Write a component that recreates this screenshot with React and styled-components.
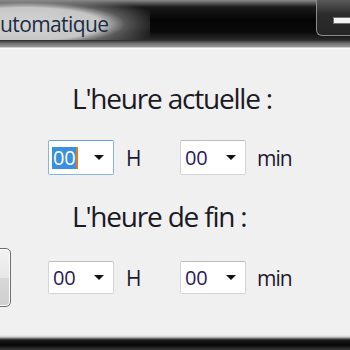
import React from "react";
import styled, { createGlobalStyle } from "styled-components";

const Global = createGlobalStyle`
  body {
    margin: 0;
    background: #f0f0f0;
    font-family: "Open Sans", "Noto Sans", sans-serif;
  }
`;

const Window = styled.div`
  width: 350px;
  height: 350px;
  display: flex;
  flex-direction: column;
  overflow: hidden;
  background: #f0f0f0;
`;

const TitleBar = styled.div`
  height: 40px;
  flex-shrink: 0;
  display: flex;
  align-items: flex-start;
  background: linear-gradient(#8a8a8a 0, #4a4a4a 4px, #1a1a1a 7px, #050505 20px, #0a0a0a 32px, #2a2a2a 40px);
`;

const TitleGlow = styled.div`
  height: 40px;
  width: 150px;
  display: flex;
  align-items: center;
  background: radial-gradient(ellipse 140px 30px at 25px 24px, #d4d4d4 0, #c6c6c6 55%, rgba(140, 140, 140, 0.6) 72%, rgba(20, 20, 20, 0) 100%);
`;

const Title = styled.span`
  font-family: "Open Sans", "Noto Sans", sans-serif;
  font-size: 21px;
  color: #1c2c44;
  letter-spacing: -0.6px;
  margin-top: 8px;
`;

const MinButton = styled.div`
  margin-left: auto;
  width: 34px;
  height: 36px;
  box-sizing: border-box;
  border: 1px solid #8c8c8c;
  border-top: none;
  border-right: none;
  border-bottom-left-radius: 6px;
  background: linear-gradient(#5a5a5a, #2c2c2c 40%, #262626);
  display: flex;
  align-items: center;
  justify-content: flex-end;
  padding-top: 6px;
`;

const MinBar = styled.span`
  width: 16px;
  height: 5px;
  background: #f4f4f4;
  border: 1px solid #707070;
  border-right: none;
`;

const Frame = styled.div`
  height: 10px;
  flex-shrink: 0;
  background: linear-gradient(#2a2a2a, #6a6a6a 3px, #9a9a9a 7px, #ffffff 8px, #f0f0f0 10px);
`;

const Content = styled.div`
  flex: 1;
  display: flex;
  flex-direction: column;
  background: #f0f0f0;
`;

const Heading = styled.div`
  font-family: "Open Sans", "Noto Sans", sans-serif;
  font-size: 28px;
  letter-spacing: -1.2px;
  color: #1a1a24;
  line-height: 34px;
  padding-left: 72px;
  margin-top: ${p => p.$top}px;
`;

const Row = styled.div`
  display: flex;
  align-items: center;
  height: 35px;
  padding-left: 48px;
  margin-top: ${p => p.$top}px;
`;

const SideButton = styled.div`
  flex-shrink: 0;
  width: 60px;
  height: 59px;
  margin-left: -97px;
  margin-right: 37px;
  box-sizing: border-box;
  border: 1px solid #707070;
  border-radius: 5px;
  background: linear-gradient(#f2f2f2, #e8e8e8 50%, #d8d8d8 51%, #cfcfcf);
  box-shadow: inset 0 0 0 1px #fbfbfb;
`;

const Combo = styled.div`
  flex-shrink: 0;
  width: 66px;
  height: ${p => p.$h}px;
  box-sizing: border-box;
  border: 1px solid ${p => (p.$focus ? "#88b4e0" : "#d4d4d4")};
  border-top-color: ${p => (p.$focus ? "#6a9ed4" : "#bcbcbc")};
  border-radius: 2px;
  background: #fff;
  display: flex;
  align-items: center;
  padding-left: 3px;
  padding-right: 9px;
`;

const Value = styled.span`
  font-family: "Open Sans", "Noto Sans", sans-serif;
  font-size: 20px;
  letter-spacing: -0.3px;
  line-height: 22px;
  color: ${p => (p.$selected ? "#ffffff" : "#2a1a5a")};
  background: ${p => (p.$selected ? "#3b8fe0" : "transparent")};
  border-right: ${p => (p.$selected ? "2px solid #e07a20" : "none")};
  padding: 0 1px;
`;

const Arrow = styled.span`
  margin-left: auto;
  width: 0;
  height: 0;
  border-left: 5px solid transparent;
  border-right: 5px solid transparent;
  border-top: 5px solid #111;
`;

const Unit = styled.span`
  flex-shrink: 0;
  font-family: "Open Sans", "Noto Sans", sans-serif;
  font-size: 21px;
  letter-spacing: -1px;
  color: #1e1a30;
  margin-left: ${p => p.$ml}px;
  width: ${p => p.$w}px;
`;

const BottomEdge = styled.div`
  height: 15px;
  flex-shrink: 0;
  background: linear-gradient(#f0f0f0, #d0d0d0 2px, #8a8a8a 3px, #1a1a1a 5px, #050505 10px, #3a3a3a 15px);
`;

const TimeCombo = ({ focus, h }) => (
  <Combo $focus={focus} $h={h}>
    <Value $selected={focus}>00</Value>
    <Arrow />
  </Combo>
);

const TimeRow = ({ top, focus, h, withButton }) => (
  <Row $top={top}>
    {withButton && <SideButton />}
    <TimeCombo focus={focus} h={h} />
    <Unit $ml={12} $w={54}>H</Unit>
    <TimeCombo h={h} />
    <Unit $ml={11} $w={40}>min</Unit>
  </Row>
);

export default function App() {
  return (
    <>
      <Global />
      <Window>
        <TitleBar>
          <TitleGlow>
            <Title>utomatique</Title>
          </TitleGlow>
          <MinButton>
            <MinBar />
          </MinButton>
        </TitleBar>
        <Frame />
        <Content>
          <Heading $top={31}>L'heure actuelle :</Heading>
          <TimeRow top={25} focus h={35} />
          <Heading $top={24}>L'heure de fin :</Heading>
          <TimeRow top={27} h={33} withButton />
        </Content>
        <BottomEdge />
      </Window>
    </>
  );
}
